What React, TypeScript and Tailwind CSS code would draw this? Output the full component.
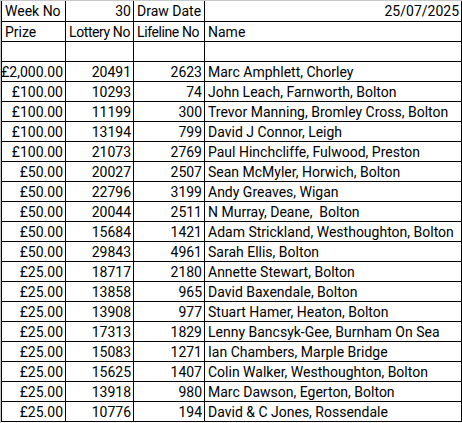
const rows: [string, string, string, string][] = [
  ["£2,000.00", "20491", "2623", "Marc Amphlett, Chorley"],
  ["£100.00", "10293", "74", "John Leach, Farnworth, Bolton"],
  ["£100.00", "11199", "300", "Trevor Manning, Bromley Cross, Bolton"],
  ["£100.00", "13194", "799", "David J Connor, Leigh"],
  ["£100.00", "21073", "2769", "Paul Hinchcliffe, Fulwood, Preston"],
  ["£50.00", "20027", "2507", "Sean McMyler, Horwich, Bolton"],
  ["£50.00", "22796", "3199", "Andy Greaves, Wigan"],
  ["£50.00", "20044", "2511", "N Murray, Deane,  Bolton"],
  ["£50.00", "15684", "1421", "Adam Strickland, Westhoughton, Bolton"],
  ["£50.00", "29843", "4961", "Sarah Ellis, Bolton"],
  ["£25.00", "18717", "2180", "Annette Stewart, Bolton"],
  ["£25.00", "13858", "965", "David Baxendale, Bolton"],
  ["£25.00", "13908", "977", "Stuart Hamer, Heaton, Bolton"],
  ["£25.00", "17313", "1829", "Lenny Bancsyk-Gee, Burnham On Sea"],
  ["£25.00", "15083", "1271", "Ian Chambers, Marple Bridge"],
  ["£25.00", "15625", "1407", "Colin Walker, Westhoughton, Bolton"],
  ["£25.00", "13918", "980", "Marc Dawson, Egerton, Bolton"],
  ["£25.00", "10776", "194", "David & C Jones, Rossendale"],
];

function Cell({
  text,
  right,
  first,
  tight,
}: {
  text: string;
  right?: boolean;
  first?: boolean;
  tight?: boolean;
}) {
  return (
    <div
      className={`bg-white ${first ? "h-[20px]" : "h-[19px]"} flex items-center overflow-hidden whitespace-pre leading-none ${
        right ? "justify-end pr-[2px]" : "pl-[3px]"
      } ${tight ? "tracking-[-0.4px]" : ""}`}
    >
      {text}
    </div>
  );
}

export default function App() {
  return (
    <div className="w-[462px] h-[423px] bg-white border-t border-l border-[#c8c8c8]">
      <div
        className="grid grid-cols-[63px_67px_70px_256px] gap-px bg-black border-l border-r border-b border-black w-[461px] text-[14px] text-black"
        style={{ fontFamily: 'Roboto, "Liberation Sans", sans-serif' }}
      >
        <Cell first text="Week No" />
        <Cell first right text="30" />
        <Cell first text="Draw Date" />
        <Cell first right text="25/07/2025" />

        <Cell text="Prize" />
        <Cell tight text="Lottery No" />
        <Cell tight text="Lifeline No" />
        <Cell text="Name" />

        <Cell text="" />
        <Cell text="" />
        <Cell text="" />
        <Cell text="" />

        {rows.map((r, i) => (
          <div key={i} className="contents">
            <Cell right text={r[0]} />
            <Cell right text={r[1]} />
            <Cell right text={r[2]} />
            <Cell text={r[3]} />
          </div>
        ))}
      </div>
    </div>
  );
}
